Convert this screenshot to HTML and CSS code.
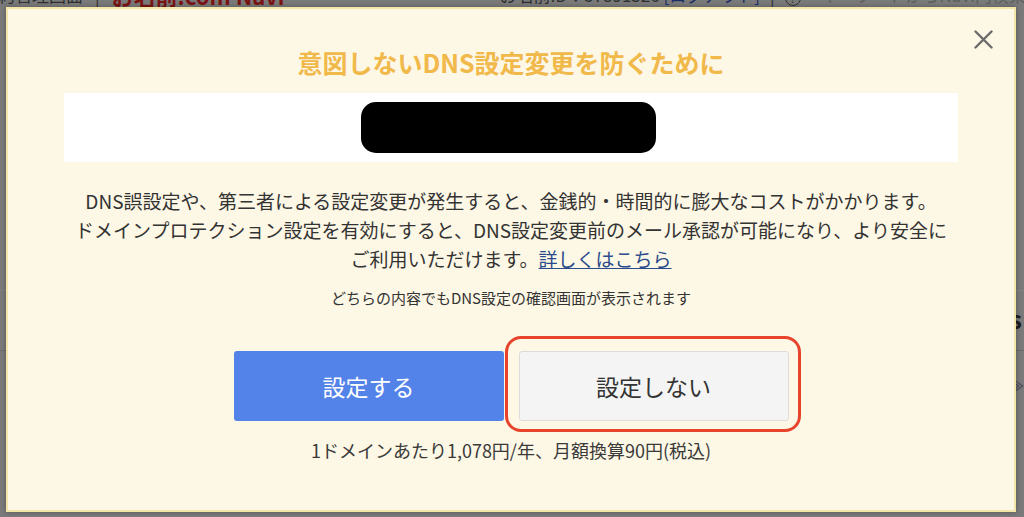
FILE: index.html
```html
<!DOCTYPE html>
<html lang="ja">
<head>
    <meta charset="UTF-8">
    <meta name="viewport" content="width=device-width, initial-scale=1.0">
    <title>お名前.com Navi</title>
    <link rel="stylesheet" href="styles.css">
</head>
<body>
    <header class="site-header">
        <div class="header-left">
            <span>契約管理画面</span>
            <span class="sep">|</span>
            <span class="brand">お名前.com Navi</span>
        </div>
        <div class="header-right">
            <span>お名前ID：57891326 <a href="#" class="logout">[ログアウト]</a></span>
            <span class="sep">|</span>
            <span class="help">?</span>
            <span class="search">キーワードからNavi内検索</span>
        </div>
    </header>

    <main class="page">
        <section class="page-panel">
            <h2>Domains</h2>
        </section>
        <p class="page-row">ドメイン一覧 ≫</p>
    </main>

    <!-- domain protection popup -->
    <div class="modal">
        <button class="modal-close" aria-label="閉じる">
            <svg width="19" height="19" viewBox="0 0 19 19">
                <path d="M1.5 1.5 L17.5 17.5 M17.5 1.5 L1.5 17.5" stroke="#6b6b6b" stroke-width="2.4" stroke-linecap="round" fill="none"/>
            </svg>
        </button>
        <h1 class="modal-title">意図しないDNS設定変更を防ぐために</h1>
        <div class="modal-banner">
            <div class="redacted"></div>
        </div>
        <p class="modal-text">
            DNS誤設定や、第三者による設定変更が発生すると、金銭的・時間的に膨大なコストがかかります。<br>
            ドメインプロテクション設定を有効にすると、DNS設定変更前のメール承認が可能になり、より安全に<br>
            ご利用いただけます。<a href="#">詳しくはこちら</a>
        </p>
        <p class="modal-note">どちらの内容でもDNS設定の確認画面が表示されます</p>
        <div class="modal-actions">
            <button class="btn btn-primary">設定する</button>
            <button class="btn btn-secondary">設定しない</button>
        </div>
        <p class="modal-price">1ドメインあたり1,078円/年、月額換算90円(税込)</p>
    </div>
</body>
</html>
```

FILE: styles.css
```css
* {
  box-sizing: border-box;
}
body {
  margin: 0;
  height: 517px;
  overflow: hidden;
  font-family: "Noto Sans CJK JP", "Noto Sans", sans-serif;
  background: #7a7a7a;
  color: #2b2b2b;
}

/* page behind the overlay (dimmed) */
.site-header {
  display: flex;
  align-items: flex-end;
  height: 7px;
  overflow: hidden;
  font-size: 17px;
  line-height: 22px;
  color: #2e2e2e;
  white-space: nowrap;
}
.header-left,
.header-right {
  display: flex;
  align-items: flex-end;
  margin-bottom: 1px;
}
.header-left {
  gap: 12px;
  margin-left: -19px;
}
.header-left .brand {
  color: #7c1414;
  font-size: 22px;
  font-weight: bold;
}
.header-right {
  gap: 10px;
  margin-left: 215px;
}
.logout {
  color: #1d2f66;
  text-decoration: none;
}
.help {
  width: 16px;
  height: 16px;
  border: 1px solid #333;
  border-radius: 50%;
  font-size: 11px;
  line-height: 14px;
  text-align: center;
}
.search {
  color: #5e5e5e;
  padding-left: 10px;
}

.page {
  padding-top: 283px;
}
.page-panel {
  display: flex;
  justify-content: flex-end;
  height: 61px;
  border-top: 1px solid #828282;
  border-bottom: 1px solid #6c6c6c;
}
.page-panel h2 {
  margin: 14px 2px 0 0;
  font-size: 24px;
  line-height: 28px;
  color: #1e1e1e;
}
.page-row {
  margin: 24px 0 0;
  text-align: right;
  font-size: 13px;
  color: #3a3a50;
}

/* modal */
.modal {
  position: absolute;
  top: 7px;
  left: 6px;
  width: 1010px;
  height: 505px;
  padding: 35px 56px 0;
  background: #fdf7e5;
  border: 2px solid #f2e7a8;
  box-shadow: 0 0 5px rgba(0, 0, 0, 0.3);
  text-align: center;
}
.modal-close {
  position: absolute;
  top: 21px;
  right: 21px;
  width: 19px;
  height: 19px;
  padding: 0;
  border: none;
  background: none;
  cursor: pointer;
}
.modal-close svg {
  display: block;
}
.modal-title {
  margin: 0;
  font-size: 25px;
  line-height: 36px;
  font-weight: bold;
  color: #f1b84a;
}
.modal-banner {
  display: flex;
  justify-content: center;
  margin-top: 13px;
  padding: 9px 0;
  background: #ffffff;
}
.redacted {
  width: 295px;
  height: 51px;
  margin-right: 5px;
  border-radius: 15px;
  background: #000000;
}
.modal-text {
  margin: 24px -20px 0;
  font-size: 19px;
  line-height: 29px;
  color: #333333;
  white-space: nowrap;
}
.modal-text a {
  color: #2b4b8c;
  text-decoration: underline;
}
.modal-note {
  margin: 14px 0 0;
  font-size: 15px;
  line-height: 22px;
  color: #333333;
}
.modal-actions {
  display: flex;
  justify-content: center;
  gap: 15px;
  margin-top: 42px;
}
.btn {
  width: 270px;
  height: 70px;
  font-family: inherit;
  font-size: 23px;
  border-radius: 3px;
  cursor: pointer;
}
.btn-primary {
  border: none;
  background: #5383e8;
  color: #ffffff;
}
.btn-secondary {
  position: relative;
  border: 1px solid #dcdcdc;
  background: #f4f4f4;
  color: #333333;
}
/* red highlight drawn around the second button */
.btn-secondary::after {
  content: "";
  position: absolute;
  top: -16px;
  left: -15px;
  right: -13px;
  bottom: -12px;
  border: 3px solid #e8432b;
  border-radius: 16px;
}
.modal-price {
  margin: 17px 0 0;
  font-size: 18px;
  line-height: 25px;
  color: #3a3a3a;
}
```
